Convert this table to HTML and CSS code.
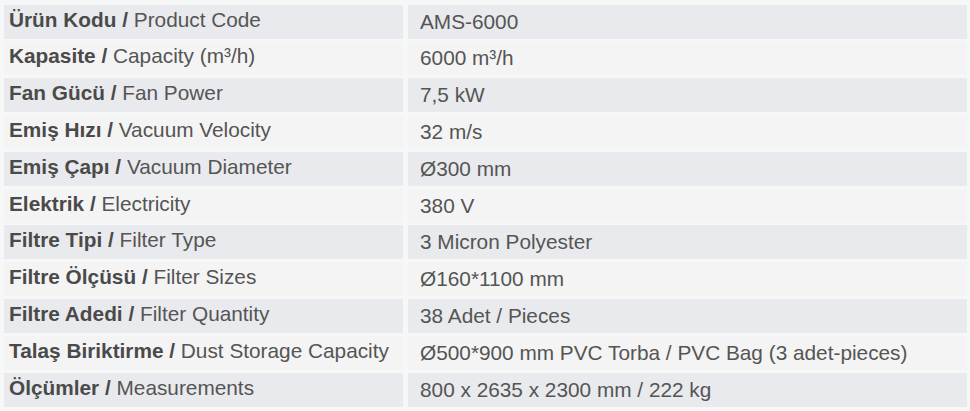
FILE: index.html
```html
<!DOCTYPE html>
<html lang="tr">
<head>
<meta charset="utf-8">
<title>AMS-6000</title>
<link rel="stylesheet" href="styles.css">
</head>
<body>
<div class="specs">
  <div class="cell key odd"><span><b>Ürün Kodu /</b> Product Code</span></div>
  <div class="cell val odd"><span>AMS-6000</span></div>
  <div class="cell key even"><span><b>Kapasite /</b> Capacity (m³/h)</span></div>
  <div class="cell val even"><span>6000 m³/h</span></div>
  <div class="cell key odd"><span><b>Fan Gücü /</b> Fan Power</span></div>
  <div class="cell val odd"><span>7,5 kW</span></div>
  <div class="cell key even"><span><b>Emiş Hızı /</b> Vacuum Velocity</span></div>
  <div class="cell val even"><span>32 m/s</span></div>
  <div class="cell key odd"><span><b>Emiş Çapı /</b> Vacuum Diameter</span></div>
  <div class="cell val odd"><span>Ø300 mm</span></div>
  <div class="cell key even"><span><b>Elektrik /</b> Electricity</span></div>
  <div class="cell val even"><span>380 V</span></div>
  <div class="cell key odd"><span><b>Filtre Tipi /</b> Filter Type</span></div>
  <div class="cell val odd"><span>3 Micron Polyester</span></div>
  <div class="cell key even"><span><b>Filtre Ölçüsü /</b> Filter Sizes</span></div>
  <div class="cell val even"><span>Ø160*1100 mm</span></div>
  <div class="cell key odd"><span><b>Filtre Adedi /</b> Filter Quantity</span></div>
  <div class="cell val odd"><span>38 Adet / Pieces</span></div>
  <div class="cell key even"><span><b>Talaş Biriktirme /</b> Dust Storage Capacity</span></div>
  <div class="cell val even"><span>Ø500*900 mm PVC Torba / PVC Bag (3 adet-pieces)</span></div>
  <div class="cell key odd"><span><b>Ölçümler /</b> Measurements</span></div>
  <div class="cell val odd"><span>800 x 2635 x 2300 mm / 222 kg</span></div>
</div>
</body>
</html>
```
FILE: styles.css
```css
html, body {
  margin: 0;
  padding: 0;
  background: #f6f7f7;
}
.specs {
  display: grid;
  grid-template-columns: 399px 559px;
  grid-auto-rows: 34px;
  column-gap: 5px;
  row-gap: 2.8px;
  padding: 4.7px 3px 4px 4px;
  font-family: "Liberation Sans", Arial, sans-serif;
  font-size: 20.8px;
  color: #555555;
}
.cell {
  display: flex;
  align-items: center;
  white-space: nowrap;
}
.key {
  padding: 0 0 4px 5px;
}
.val {
  padding: 0 0 0 12px;
}
.key b {
  font-weight: bold;
  color: #4a4a4a;
}
.odd {
  background: #e9eaed;
}
.even {
  background: #f4f4f4;
}
```
